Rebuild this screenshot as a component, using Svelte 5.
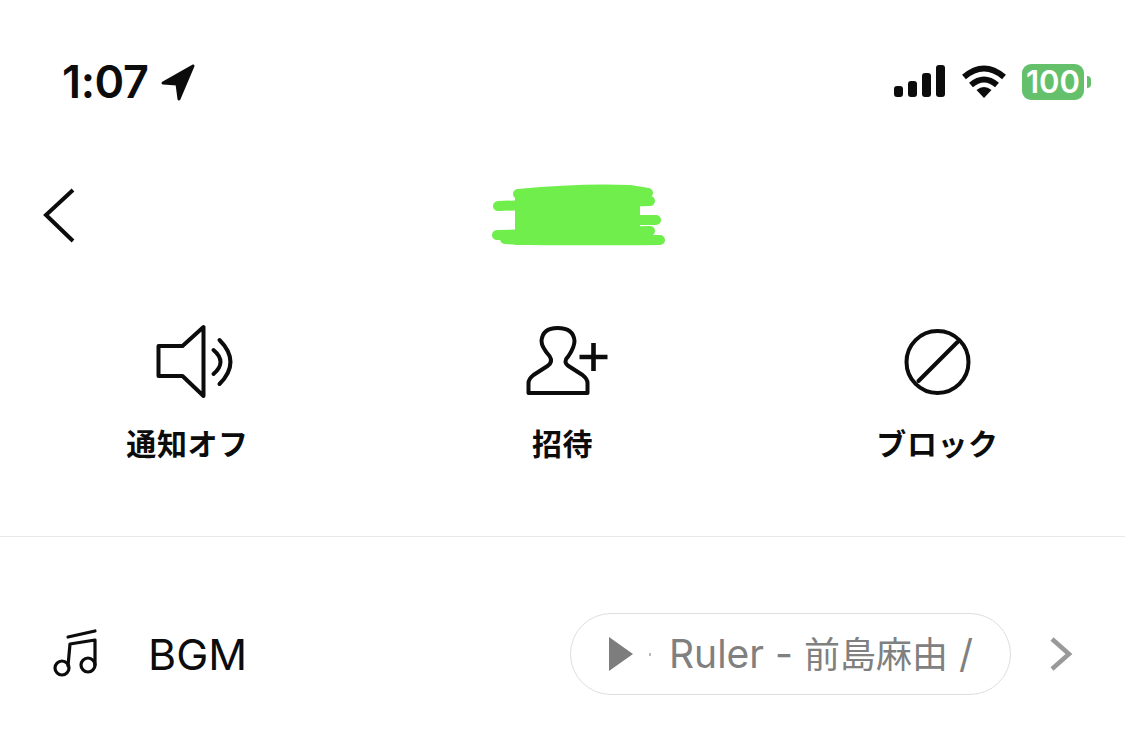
<script>
  // Action buttons under the header
  const actions = [
    { id: 'mute', label: '通知オフ', viewBox: '17.5 10 120 80' },
    { id: 'invite', label: '招待', viewBox: '2.5 10 120 80' },
    { id: 'block', label: 'ブロック', viewBox: '17.5 10 120 80' },
  ];
</script>

<main class="page">
  <header class="status">
    <div class="status-left">
      <span class="time">1:07</span>
      <svg class="location" width="36" height="38" viewBox="0 0 36 38">
        <path d="M33 3 L3 20 L17 21 L19 36 Z" />
      </svg>
    </div>
    <div class="status-right">
      <svg class="signal" width="52" height="34" viewBox="0 0 52 34">
        <rect x="1" y="22" width="9" height="11" rx="3" />
        <rect x="15" y="17" width="9" height="16" rx="3" />
        <rect x="29" y="9" width="9" height="24" rx="3" />
        <rect x="43" y="1" width="9" height="32" rx="3" />
      </svg>
      <svg class="wifi" width="46" height="34" viewBox="0 0 46 34">
        <path d="M3 12 Q23 -5 43 12" />
        <path d="M10 20 Q23 9 36 20" />
        <path class="wedge" d="M15.5 25 Q23 19 30.5 25 L23 33 Z" />
      </svg>
      <div class="battery">
        <span class="battery-body">100</span>
        <span class="battery-nub"></span>
      </div>
    </div>
  </header>

  <nav class="nav">
    <svg class="back" width="34" height="56" viewBox="0 0 34 56">
      <path d="M30 2 L3 27 L30 53" />
    </svg>
    <svg class="scribble" width="220" height="90" viewBox="0 0 220 90">
      <rect x="45" y="20" width="125" height="54" />
      <path d="M48 23 Q110 17 160 19 L178 22" />
      <path d="M28 35 L180 30" />
      <path d="M50 49 L186 49" />
      <path d="M27 64 L180 60" />
      <path d="M35 68 Q60 70 190 69" />
    </svg>
  </nav>

  <section class="actions">
    {#each actions as action (action.id)}
      <div class="action">
        <svg class="action-icon" width="120" height="80" viewBox={action.viewBox}>
          {#if action.id === 'mute'}
            <path d="M48 36 H72 L93 17 V86 L72 66 H48 Z" />
            <path d="M103 40 Q117 52 103 64" />
            <path d="M109 30 Q131 52 109 74" />
          {:else if action.id === 'invite'}
            <path d="M28 83 V73 Q28 69 33 65 L47 56 Q53 52 49 46 Q41 37 41 31 Q42 18 57 18 Q73 18 74 31 Q74 37 68 46 Q62 52 68 56 L82 65 Q87 69 87 73 V83 Z" />
            <path class="plus" d="M80 47 H108 M94 33 V61" />
          {:else}
            <circle cx="77" cy="52" r="31" />
            <path d="M58 71 L97 32" />
          {/if}
        </svg>
        <span class="action-label">{action.label}</span>
      </div>
    {/each}
  </section>

  <section class="bgm">
    <svg class="note" width="60" height="64" viewBox="20 11 60 64">
      <path d="M38 26 L65 20" />
      <path d="M38 55 L40 33 L65 29 V54" />
      <circle cx="32" cy="57" r="7" />
      <circle cx="58" cy="54" r="7" />
    </svg>
    <span class="bgm-title">BGM</span>
    <div class="pill">
      <svg class="play" width="26" height="34" viewBox="0 0 26 34">
        <path d="M1 0 L25 17 L1 34 Z" />
      </svg>
      <span class="dot"></span>
      <span class="track">
        <span class="latin">Ruler -</span>
        <span class="artist">前島麻由</span>
        <span class="latin">/</span>
      </span>
    </div>
    <svg class="more" width="24" height="36" viewBox="0 0 24 36">
      <path d="M3 3 L20 18 L3 33" />
    </svg>
  </section>
</main>

<style>
  :global(body) {
    background: #fff;
  }

  .page {
    width: 1125px;
    height: 735px;
    overflow: hidden;
    color: #0c0c0c;
    font-family: Inter, "Noto Sans CJK JP", sans-serif;
  }

  /* status bar */
  .status {
    height: 165px;
    box-sizing: border-box;
    padding: 60px 34px 0 62px;
    display: flex;
    justify-content: space-between;
    align-items: flex-start;
  }

  .status-left {
    display: flex;
    align-items: center;
    height: 44px;
    gap: 11px;
  }

  .time {
    font-size: 45px;
    font-weight: 600;
    line-height: 44px;
    letter-spacing: -0.4px;
  }

  .location path {
    fill: #0c0c0c;
    stroke: #0c0c0c;
    stroke-width: 3;
    stroke-linejoin: round;
  }

  .status-right {
    display: flex;
    align-items: center;
    height: 44px;
  }

  .signal {
    margin: 0 0 2px 0;
    fill: #0c0c0c;
  }

  .wifi {
    margin: 0 15px 0 16px;
  }

  .wifi path {
    fill: none;
    stroke: #0c0c0c;
    stroke-width: 6;
  }

  .wifi .wedge {
    fill: #0c0c0c;
    stroke: none;
  }

  .battery {
    display: flex;
    align-items: center;
    gap: 3px;
  }

  .battery-body {
    width: 62px;
    height: 36px;
    border-radius: 9px;
    background: #65c06b;
    color: #fff;
    font-size: 31px;
    font-weight: 600;
    line-height: 36px;
    text-align: center;
  }

  .battery-nub {
    width: 4px;
    height: 12px;
    border-radius: 0 6px 6px 0;
    background: #65c06b;
  }

  /* header */
  .nav {
    height: 102px;
    display: flex;
    align-items: center;
    padding-left: 43px;
  }

  .back path {
    fill: none;
    stroke: #0c0c0c;
    stroke-width: 4;
  }

  .scribble {
    margin-left: 393px;
  }

  .scribble rect {
    fill: #6fee4c;
  }

  .scribble path {
    fill: none;
    stroke: #6fee4c;
    stroke-width: 10;
    stroke-linecap: round;
  }

  /* actions */
  .actions {
    display: grid;
    grid-template-columns: repeat(3, 375px);
    padding: 53px 0 70px;
    border-bottom: 1px solid #e8e8e8;
  }

  .action {
    display: flex;
    flex-direction: column;
    align-items: center;
    gap: 22px;
  }

  .action-icon {
    fill: none;
    stroke: #0c0c0c;
    stroke-width: 4;
    stroke-linejoin: round;
    stroke-linecap: round;
  }

  .action-icon .plus {
    stroke-width: 4.6;
    stroke-linecap: butt;
    transform: translateX(-1px);
  }

  .action-label {
    font-size: 30px;
    font-weight: 700;
    line-height: 44px;
    letter-spacing: 0.6px;
  }

  /* bgm row */
  .bgm {
    display: flex;
    align-items: center;
    padding: 76px 0 0 50px;
  }

  .note {
    fill: none;
    stroke: #0c0c0c;
    stroke-width: 3.2;
    stroke-linecap: round;
    stroke-linejoin: round;
  }

  .bgm-title {
    margin-left: 38px;
    width: 422px;
    font-size: 43px;
    font-weight: 400;
    line-height: 50px;
  }

  .pill {
    width: 441px;
    height: 82px;
    box-sizing: border-box;
    border: 1.5px solid #dedede;
    border-radius: 41px;
    padding-left: 37px;
    display: flex;
    align-items: center;
    overflow: hidden;
  }

  .play path {
    fill: #7d7d7d;
  }

  .dot {
    width: 2px;
    height: 3px;
    margin: 0 0 0 15px;
    background: #bbb;
  }

  .track {
    margin-left: 18px;
    display: flex;
    align-items: baseline;
    gap: 11px;
    color: #808080;
    font-size: 36px;
    line-height: 44px;
    white-space: nowrap;
  }

  .latin {
    font-size: 39px;
  }

  .more {
    margin-left: 38px;
  }

  .more path {
    fill: none;
    stroke: #999;
    stroke-width: 4.5;
  }
</style>
